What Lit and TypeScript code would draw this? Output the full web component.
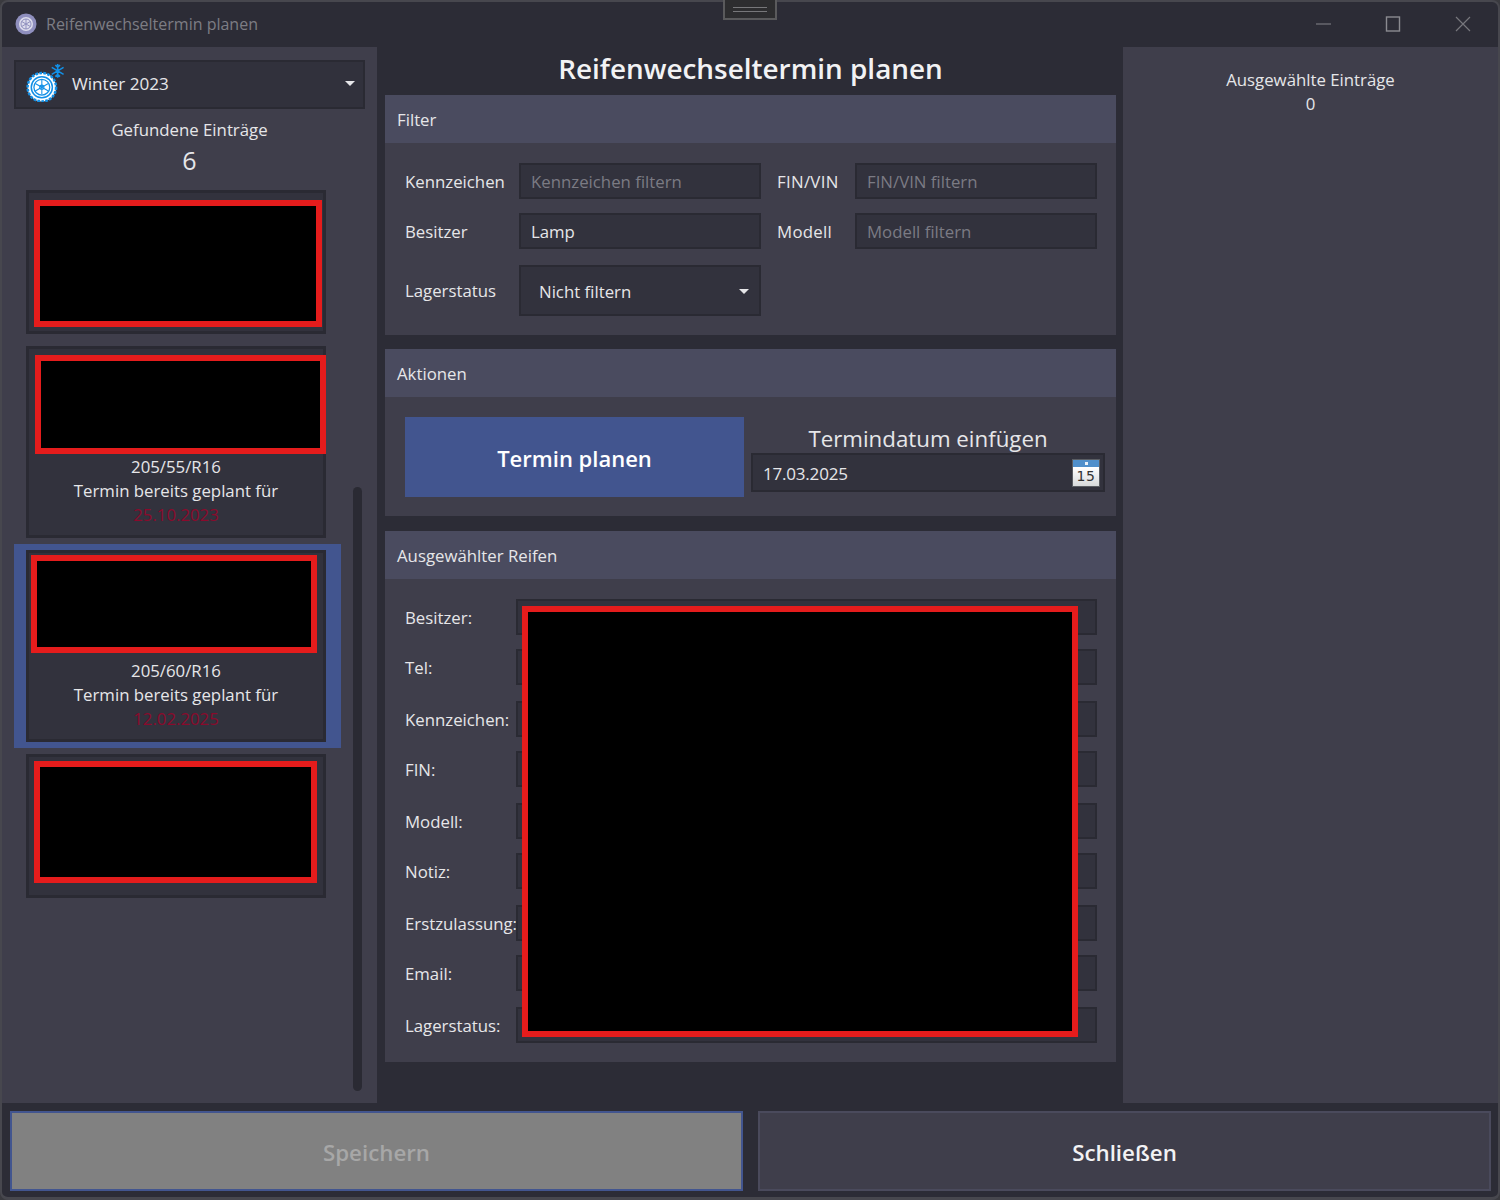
import { LitElement, html, css, svg } from "lit";
import { customElement } from "lit/decorators.js";

const tire = (size: number) => svg`
<svg class="tire" width=${size} height=${size} viewBox="0 0 36 36">
  <circle cx="15" cy="22" r="13.5" fill="#fff" stroke="#1390e6" stroke-width="2.4" stroke-dasharray="2.6 1.2"/>
  <circle cx="15" cy="22" r="10" fill="none" stroke="#1390e6" stroke-width="1.4"/>
  <circle cx="15" cy="22" r="7.5" fill="#fff" stroke="#1390e6" stroke-width="1.2"/>
  <circle cx="15" cy="22" r="2" fill="none" stroke="#1390e6" stroke-width="1"/>
  <path d="M15 15v14M8.8 18.5l12.4 7M8.8 25.5l12.4-7" stroke="#1390e6" stroke-width="1"/>
  <path d="M30 0v13M24.4 3.2l11.2 6.6M24.4 9.8l11.2-6.6M27.8 1l2.2 2.2L32.2 1M27.8 12l2.2-2.2 2.2 2.2" stroke="#1390e6" stroke-width="1.5" fill="none"/>
</svg>`;

@customElement("app-root")
export class AppRoot extends LitElement {
  static styles = css`
    :host {
      display: block;
      width: 1500px;
      height: 1200px;
      font-family: "Open Sans", "Noto Sans", sans-serif;
      font-size: 16.8px;
      color: #e6e6e9;
      background: #3a3a3f;
    }
    * { box-sizing: border-box; }
    .window {
      position: relative;
      width: 1500px;
      height: 1200px;
      display: grid;
      grid-template-rows: 45px 1056px 1fr;
      background: #2c2c36;
      border: 2px solid #47474e;
      border-bottom-width: 3px;
      border-radius: 8px;
    }
    .titlebar {
      display: flex;
      align-items: center;
      padding: 0 0 2px 13px;
      color: #7d7d84;
      font-size: 16px;
    }
    .app-icon {
      width: 22px;
      height: 22px;
      margin-right: 9px;
      flex: none;
    }
    .win-controls {
      margin-left: auto;
      display: flex;
    }
    .win-btn {
      width: 70px;
      height: 43px;
      display: flex;
      align-items: center;
      justify-content: center;
    }
    .snap {
      position: absolute;
      left: 721px;
      top: -2px;
      width: 54px;
      height: 20px;
      background: #2d2d2f;
      border: 2px solid #5a5a5c;
      border-top: none;
      display: flex;
      align-items: center;
      justify-content: center;
    }
    .snap i {
      display: block;
      width: 34px;
      height: 5px;
      border-top: 1px solid #77777a;
      border-bottom: 1px solid #77777a;
    }
    .main {
      display: grid;
      grid-template-columns: 375px 746px 375px;
      min-height: 0;
    }
    .left {
      background: #3f3e4b;
      position: relative;
      padding: 13px 12px 0;
    }
    .season {
      display: flex;
      align-items: center;
      height: 49px;
      width: 351px;
      background: #31313c;
      border: 2px solid #2a2a33;
      padding: 0 0 2px 10px;
      font-size: 17.1px;
    }
    .season .tire { margin-right: 8px; margin-top: -2px; }
    .caret {
      width: 0;
      height: 0;
      border-left: 5px solid transparent;
      border-right: 5px solid transparent;
      border-top: 5px solid #e6e6e9;
      margin-left: auto;
    }
    .season .caret { margin-right: 8px; }
    .found {
      width: 351px;
      text-align: center;
      margin-top: 8px;
      line-height: 26px;
    }
    .found b {
      display: block;
      font-weight: 400;
      font-size: 25px;
      line-height: 34px;
    }
    .list {
      display: flex;
      flex-direction: column;
      align-items: flex-start;
      margin-top: 13px;
      gap: 12px;
    }
    .item {
      margin-left: 12px;
      width: 300px;
      background: #32323d;
      border: 3px solid #2a2a33;
      text-align: center;
      line-height: 24px;
      display: flex;
      flex-direction: column;
      align-items: flex-start;
    }
    .item .txt { width: 294px; margin-top: 1px; }
    .item .date { color: #8a0a2c; }
    .redact {
      background: #000;
      border: 6px solid #e51c1c;
      flex: none;
    }
    .selected {
      margin-left: 0;
      margin-top: -6px;
      margin-bottom: -6px;
      padding: 6px 15px 6px 12px;
      background: #42558f;
    }
    .selected .item { margin-left: 0; }
    .r1 { width: 288px; height: 127px; margin: 7px 0 7px 5px; }
    .r2 { width: 291px; height: 99px; margin: 6px -3px 0 6px; }
    .r3 { width: 286px; height: 98px; margin: 2px 0 5px 2px; }
    .r4 { width: 283px; height: 122px; margin: 4px 0 12px 5px; }
    .h-144 { height: 144px; }
    .h-192 { height: 192px; }
    .scroll {
      position: absolute;
      left: 351px;
      top: 440px;
      width: 9px;
      height: 604px;
      border-radius: 5px;
      background: #2a2a33;
    }
    .center {
      padding: 0 7px 0 8px;
      display: flex;
      flex-direction: column;
    }
    h1 {
      margin: 0;
      height: 48px;
      line-height: 42px;
      text-align: center;
      font-size: 27.9px;
      font-weight: 600;
      color: #f2f2f4;
    }
    .panel { background: #3f3e4b; }
    .gap-14 { margin-bottom: 14px; }
    .gap-15 { margin-bottom: 15px; }
    .panel-head {
      height: 48px;
      background: #4a4b5f;
      padding-left: 12px;
      line-height: 49px;
    }
    .filter-body {
      height: 192px;
      padding: 20px 19px 0 20px;
      display: grid;
      grid-template-columns: 114px 242px 94px 242px;
      grid-template-rows: 36px 36px 55px;
      row-gap: 14px;
      align-items: center;
    }
    .field {
      height: 36px;
      background: #32323d;
      border: 2px solid #2a2a33;
      padding-left: 10px;
      line-height: 33px;
      color: #e6e6e9;
    }
    .ph { color: #7b7b84; }
    .gap-left { margin-left: 16px; letter-spacing: 0.3px; }
    .select {
      height: 51px;
      background: #32323d;
      border: 2px solid #2a2a33;
      padding: 1px 10px 0 18px;
      display: flex;
      align-items: center;
    }
    .actions-body {
      height: 119px;
      padding: 20px 11px 0 20px;
      display: grid;
      grid-template-columns: 339px 1fr;
      column-gap: 7px;
    }
    .primary {
      height: 80px;
      padding-top: 2px;
      background: #42558f;
      display: flex;
      align-items: center;
      justify-content: center;
      color: #fff;
      font-size: 22px;
      font-weight: 600;
    }
    .date-col { display: flex; flex-direction: column; }
    .date-title {
      height: 36px;
      text-align: center;
      font-size: 22.3px;
      line-height: 44px;
    }
    .date-field {
      height: 39px;
      background: #32323d;
      border: 2px solid #2a2a33;
      display: flex;
      align-items: center;
      justify-content: space-between;
      padding: 0 3px 0 10px;
      font-size: 17px;
      letter-spacing: -0.2px;
    }
    .date-field span { padding-top: 2px; }
    .cal {
      width: 28px;
      height: 28px;
      background: #5a5d63;
      padding: 1px;
      display: flex;
      flex-direction: column;
    }
    .cal-top {
      height: 7px;
      background: #4f8fcb;
      display: flex;
      align-items: center;
      justify-content: center;
    }
    .cal-top i { width: 3px; height: 3px; background: #e8f0f8; display: block; }
    .cal-num {
      flex: 1;
      background: linear-gradient(#fff, #d8dadc);
      color: #333;
      font-size: 14px;
      line-height: 19px;
      text-align: center;
      letter-spacing: 0.5px;
      font-family: "DejaVu Sans", sans-serif;
    }
    .tyre-body {
      position: relative;
      height: 483px;
      padding: 20px 19px 0 20px;
      display: grid;
      grid-template-columns: 111px 1fr;
      grid-template-rows: repeat(4, 36px 38px) 36px;
      row-gap: 14px;
      align-items: start;
    }
    .lab { line-height: 37px; white-space: nowrap; }
    .tyre-body .redact {
      position: absolute;
      left: 137px;
      top: 27px;
      width: 556px;
      height: 431px;
    }
    .right {
      background: #3f3e4b;
      text-align: center;
      padding-top: 21px;
      line-height: 24px;
    }
    .bottom {
      display: grid;
      grid-template-columns: 733px 733px;
      column-gap: 15px;
      padding: 8px 0 0 8px;
    }
    .btn {
      height: 80px;
      padding-top: 2px;
      display: flex;
      align-items: center;
      justify-content: center;
      font-size: 22.3px;
      font-weight: 600;
    }
    .save {
      background: #818181;
      border: 2px solid #42558f;
      color: #a7a7a7;
    }
    .close {
      background: #3f3e4b;
      border: 2px solid #4a4a5c;
      color: #f2f2f4;
    }
  `;

  private row(label: string) {
    return html`<div class="lab">${label}</div><div class="field"></div>`;
  }

  render() {
    const labels = ["Besitzer:", "Tel:", "Kennzeichen:", "FIN:", "Modell:", "Notiz:", "Erstzulassung:", "Email:", "Lagerstatus:"];
    return html`
      <div class="window">
        <div class="titlebar">
          <svg class="app-icon" viewBox="0 0 22 22">
            <circle cx="11" cy="11" r="10.5" fill="#8f8fbe"/>
            <circle cx="11" cy="11" r="7" fill="#dcdcec"/>
            <circle cx="11" cy="11" r="5" fill="none" stroke="#8f8fbe" stroke-width="1"/>
            <path d="M11 6v10M6.7 8.5l8.6 5M6.7 13.5l8.6-5" stroke="#8f8fbe" stroke-width="1"/>
          </svg>
          Reifenwechseltermin planen
          <div class="win-controls">
            <div class="win-btn"><svg width="16" height="16" viewBox="0 0 16 16"><path d="M1 8h15" stroke="#77777d" stroke-width="1.2"/></svg></div>
            <div class="win-btn"><svg width="16" height="16" viewBox="0 0 16 16"><rect x="1.5" y="1" width="13" height="14" fill="none" stroke="#8a8a90" stroke-width="1.4"/></svg></div>
            <div class="win-btn"><svg width="16" height="16" viewBox="0 0 16 16"><path d="M1 1l14 14M15 1L1 15" stroke="#77777d" stroke-width="1.2"/></svg></div>
          </div>
        </div>
        <div class="snap"><i></i></div>
        <div class="main">
          <div class="left">
            <div class="season">
              ${tire(38)}<span>Winter 2023</span><span class="caret"></span>
            </div>
            <div class="found">Gefundene Einträge<b>6</b></div>
            <div class="list">
              <div class="item h-144"><div class="redact r1"></div></div>
              <div class="item h-192">
                <div class="redact r2"></div>
                <div class="txt">205/55/R16<br />Termin bereits geplant für<br /><span class="date">25.10.2023</span></div>
              </div>
              <div class="selected">
                <div class="item h-192">
                  <div class="redact r3"></div>
                  <div class="txt">205/60/R16<br />Termin bereits geplant für<br /><span class="date">12.02.2025</span></div>
                </div>
              </div>
              <div class="item h-144"><div class="redact r4"></div></div>
            </div>
            <div class="scroll"></div>
          </div>
          <div class="center">
            <h1>Reifenwechseltermin planen</h1>
            <section class="panel gap-14">
              <div class="panel-head">Filter</div>
              <div class="filter-body">
                <div>Kennzeichen</div><div class="field ph">Kennzeichen filtern</div>
                <div class="gap-left">FIN/VIN</div><div class="field ph">FIN/VIN filtern</div>
                <div>Besitzer</div><div class="field">Lamp</div>
                <div class="gap-left">Modell</div><div class="field ph">Modell filtern</div>
                <div>Lagerstatus</div>
                <div class="select">Nicht filtern<span class="caret"></span></div>
              </div>
            </section>
            <section class="panel gap-15">
              <div class="panel-head">Aktionen</div>
              <div class="actions-body">
                <div class="primary">Termin planen</div>
                <div class="date-col">
                  <div class="date-title">Termindatum einfügen</div>
                  <div class="date-field">
                    <span>17.03.2025</span>
                    <div class="cal"><div class="cal-top"><i></i></div><div class="cal-num">15</div></div>
                  </div>
                </div>
              </div>
            </section>
            <section class="panel">
              <div class="panel-head">Ausgewählter Reifen</div>
              <div class="tyre-body">
                ${labels.map((l) => this.row(l))}
                <div class="redact"></div>
              </div>
            </section>
          </div>
          <div class="right">Ausgewählte Einträge<br />0</div>
        </div>
        <div class="bottom">
          <div class="btn save">Speichern</div>
          <div class="btn close">Schließen</div>
        </div>
      </div>
    `;
  }
}
